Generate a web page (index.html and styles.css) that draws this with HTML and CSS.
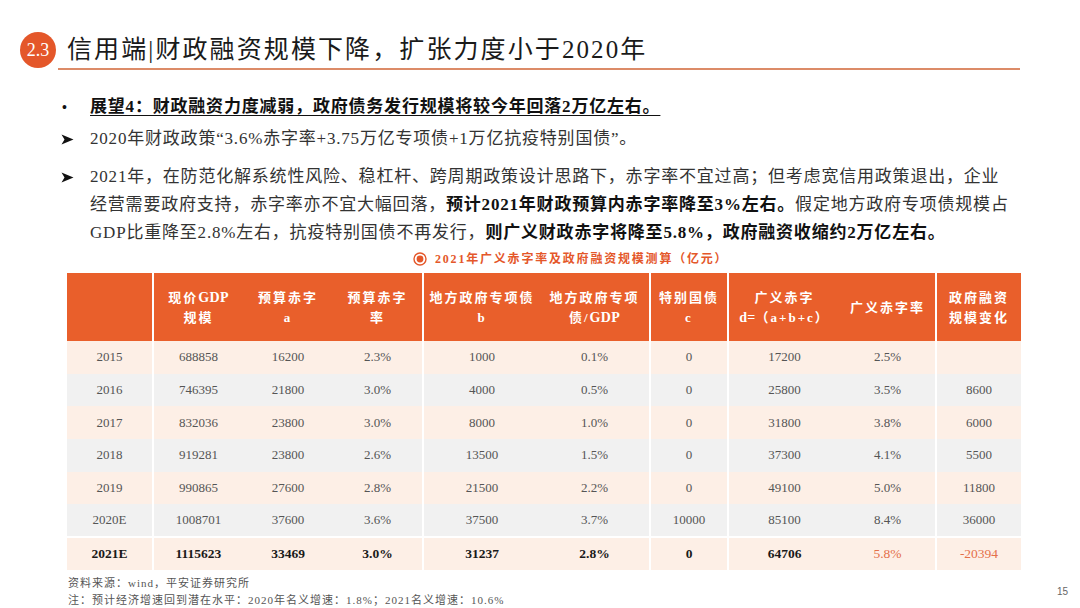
FILE: index.html
```html
<!DOCTYPE html>
<html lang="zh-CN">
<head>
<meta charset="utf-8">
<link rel="stylesheet" href="styles.css">
</head>
<body>
<div class="top">
  <div class="badge">2.3</div>
  <div class="title">信用端|财政融资规模下降，扩张力度小于2020年</div>
</div>
<div class="rule"></div>

<div class="points">
  <p class="p1"><span class="mark dot">•</span><span class="txt lead">展望4：财政融资力度减弱，政府债务发行规模将较今年回落2万亿左右。</span></p>
  <p class="p2"><span class="mark arrow"><svg width="13" height="11" viewBox="0 0 13 11"><path d="M0.5 0.5 L12.5 5.5 L0.5 10.5 L3.5 5.5 Z" fill="#111"/></svg></span><span class="txt">2020年财政政策“3.6%赤字率+3.75万亿专项债+1万亿抗疫特别国债”。</span></p>
  <p class="p3"><span class="mark arrow"><svg width="13" height="11" viewBox="0 0 13 11"><path d="M0.5 0.5 L12.5 5.5 L0.5 10.5 L3.5 5.5 Z" fill="#111"/></svg></span><span class="txt">2021年，在防范化解系统性风险、稳杠杆、跨周期政策设计思路下，赤字率不宜过高；但考虑宽信用政策退出，企业<br>经营需要政府支持，赤字率亦不宜大幅回落，<b>预计2021年财政预算内赤字率降至3%左右。</b>假定地方政府专项债规模占<br>GDP比重降至2.8%左右，抗疫特别国债不再发行，<b>则广义财政赤字将降至5.8%，政府融资收缩约2万亿左右。</b></span></p>
</div>

<div class="caption">
  <svg class="cap-icon" width="14" height="14" viewBox="0 0 14 14"><circle cx="7" cy="7" r="6" fill="none" stroke="#e4572a" stroke-width="1.4"/><circle cx="7" cy="7" r="3.4" fill="#e4572a"/></svg>
  <span>2021年广义赤字率及政府融资规模测算（亿元）</span>
</div>

<table class="data">
  <colgroup>
    <col class="c1"><col class="c2"><col class="c3"><col class="c4"><col class="c5"><col class="c6"><col class="c7"><col class="c8"><col class="c9"><col class="c10">
  </colgroup>
  <thead>
    <tr>
      <th></th>
      <th class="sep">现价<span class="lat">GDP</span><br>规模</th>
      <th>预算赤字<br>a</th>
      <th>预算赤字<br>率</th>
      <th class="sep">地方政府专项债<br>b</th>
      <th>地方政府专项<br>债/<span class="lat">GDP</span></th>
      <th class="sep">特别国债<br>c</th>
      <th class="sep">广义赤字<br><span class="lat">d=</span>（a+b+c）</th>
      <th>广义赤字率</th>
      <th class="sep">政府融资<br>规模变化</th>
    </tr>
  </thead>
  <tbody>
    <tr class="odd"><td>2015</td><td class="sep">688858</td><td>16200</td><td>2.3%</td><td class="sep">1000</td><td>0.1%</td><td class="sep">0</td><td class="sep">17200</td><td>2.5%</td><td class="sep"></td></tr>
    <tr class="even"><td>2016</td><td class="sep">746395</td><td>21800</td><td>3.0%</td><td class="sep">4000</td><td>0.5%</td><td class="sep">0</td><td class="sep">25800</td><td>3.5%</td><td class="sep">8600</td></tr>
    <tr class="odd"><td>2017</td><td class="sep">832036</td><td>23800</td><td>3.0%</td><td class="sep">8000</td><td>1.0%</td><td class="sep">0</td><td class="sep">31800</td><td>3.8%</td><td class="sep">6000</td></tr>
    <tr class="even"><td>2018</td><td class="sep">919281</td><td>23800</td><td>2.6%</td><td class="sep">13500</td><td>1.5%</td><td class="sep">0</td><td class="sep">37300</td><td>4.1%</td><td class="sep">5500</td></tr>
    <tr class="odd"><td>2019</td><td class="sep">990865</td><td>27600</td><td>2.8%</td><td class="sep">21500</td><td>2.2%</td><td class="sep">0</td><td class="sep">49100</td><td>5.0%</td><td class="sep">11800</td></tr>
    <tr class="even"><td>2020E</td><td class="sep">1008701</td><td>37600</td><td>3.6%</td><td class="sep">37500</td><td>3.7%</td><td class="sep">10000</td><td class="sep">85100</td><td>8.4%</td><td class="sep">36000</td></tr>
    <tr class="odd total"><td>2021E</td><td class="sep">1115623</td><td>33469</td><td>3.0%</td><td class="sep">31237</td><td>2.8%</td><td class="sep">0</td><td class="sep">64706</td><td class="hl">5.8%</td><td class="sep hl">-20394</td></tr>
  </tbody>
</table>

<div class="foot">
  <div class="notes">
    <div>资料来源：wind，平安证券研究所</div>
    <div>注：预计经济增速回到潜在水平：2020年名义增速：1.8%；2021名义增速：10.6%</div>
  </div>
  <div class="pageno">15</div>
</div>
</body>
</html>
```

FILE: styles.css
```css
* { box-sizing: border-box; }

body {
  margin: 0;
  width: 1080px;
  height: 608px;
  overflow: hidden;
  background: #ffffff;
  font-family: "Liberation Serif", "Noto Sans CJK SC", serif;
  color: #333333;
}

.top {
  display: flex;
  align-items: center;
  gap: 11px;
  padding: 32px 0 0 20px;
}

.badge {
  width: 36px;
  height: 36px;
  border-radius: 50%;
  background: #e4572a;
  color: #ffffff;
  font-family: "Liberation Serif", serif;
  font-size: 18px;
  display: flex;
  align-items: center;
  justify-content: center;
  flex: none;
}

.title {
  font-size: 25px;
  letter-spacing: 2.1px;
  line-height: 36px;
  color: #1a1a1a;
}

.rule {
  margin: 0 0 0 58px;
  width: 962px;
  height: 2px;
  background: #dc8b68;
}

.points {
  margin: 23px 0 0 60px;
}

.points p {
  margin: 0;
  display: flex;
  font-size: 17px;
  line-height: 28px;
  letter-spacing: 0.8px;
  color: #333333;
}

.points b {
  color: #111111;
  font-weight: 700;
}

.p1 { margin-bottom: 4px !important; }
.p2 { margin-bottom: 10px !important; }

.mark {
  width: 30px;
  flex: none;
  color: #111111;
}

.dot {
  font-family: "Liberation Sans", sans-serif;
  font-size: 14px;
  padding-left: 2px;
}

.arrow {
  display: flex;
  align-items: center;
  height: 28px;
  padding-left: 1px;
}

.arrow svg { display: block; }

.txt {
  white-space: nowrap;
}

.lead {
  font-weight: 700;
  color: #111111;
  text-decoration: underline;
  text-underline-offset: 3px;
}

.caption {
  display: flex;
  align-items: center;
  gap: 8px;
  margin: 4px 0 6px 0;
  padding-left: 413px;
  font-size: 12px;
  line-height: 16px;
  font-weight: 700;
  letter-spacing: 1.8px;
  color: #e4572a;
}

.cap-icon { flex: none; }

.data {
  margin-left: 67px;
  width: 954px;
  border-collapse: collapse;
  table-layout: fixed;
}

.c1 { width: 86px; }
.c2 { width: 90px; }
.c3 { width: 90px; }
.c4 { width: 90px; }
.c5 { width: 117px; }
.c6 { width: 110px; }
.c7 { width: 78px; }
.c8 { width: 112px; }
.c9 { width: 96px; }
.c10 { width: 85px; }

.data th {
  height: 68px;
  background: #e95f2b;
  color: #ffffff;
  font-size: 13px;
  font-weight: 700;
  letter-spacing: 2px;
  line-height: 20px;
  text-align: center;
  white-space: nowrap;
  padding: 2px 0 0 0;
}

.data th .lat {
  letter-spacing: 0.3px;
  font-size: 14px;
}

.data td {
  height: 32.7px;
  padding: 0;
  text-align: center;
  font-size: 13px;
  color: #555555;
}

.data .sep {
  border-left: 2px solid #ffffff;
}

.odd td { background: #fdefe6; }
.even td { background: #f1f1f1; }

.total td {
  border-top: 2px solid #ffffff;
  font-weight: 700;
  font-size: 13.5px;
  color: #1a1a1a;
}

.total td.hl {
  font-weight: 400;
  color: #e4704a;
}

.foot {
  display: flex;
  justify-content: space-between;
  align-items: center;
  margin: 5px 12px 0 68px;
}

.notes {
  font-size: 11px;
  line-height: 17px;
  letter-spacing: 1px;
  color: #555555;
}

.pageno {
  font-family: "Liberation Sans", sans-serif;
  font-size: 10px;
  color: #666666;
}
```
